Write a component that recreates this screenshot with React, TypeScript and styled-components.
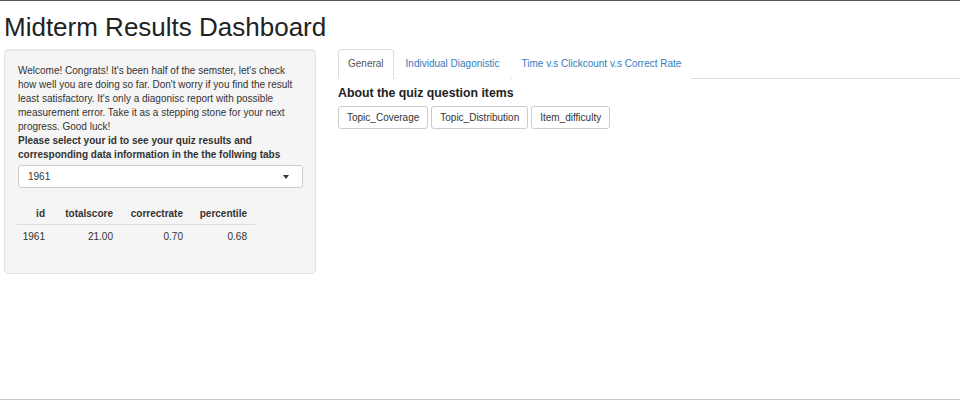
import React from "react";
import styled, { createGlobalStyle } from "styled-components";

const Global = createGlobalStyle`
  html, body { margin: 0; padding: 0; background: #fff; }
  body {
    font-family: "Liberation Sans", Arial, sans-serif;
    font-size: 10px;
    line-height: 14px;
    color: #333;
    width: 960px;
    height: 400px;
    overflow: hidden;
  }
  #root { height: 400px; }
`;

const Page = styled.div`
  box-sizing: border-box;
  height: 400px;
  border-top: 1px solid #555;
  border-bottom: 1px solid #c8c8c8;
  padding: 0 0 0 4px;
`;

const Title = styled.h1`
  margin: 0;
  padding-top: 10px;
  height: 38px;
  font-size: 26px;
  line-height: 32px;
  font-weight: 500;
  color: #222;
`;

const Row = styled.div`
  display: flex;
  align-items: flex-start;
  gap: 22px;
`;

const Sidebar = styled.div`
  box-sizing: border-box;
  width: 312px;
  height: 225px;
  background: #f5f5f5;
  border: 1px solid #e3e3e3;
  border-radius: 4px;
  padding: 14px 12px 0 13px;
  box-shadow: inset 0 1px 1px rgba(0, 0, 0, 0.05);
`;

const Intro = styled.p`
  margin: 0;
`;

const Strong = styled.p`
  margin: 0;
  font-weight: bold;
`;

const Select = styled.div`
  box-sizing: border-box;
  margin-top: 3px;
  height: 23px;
  width: 285px;
  background: #fff;
  border: 1px solid #ccc;
  border-radius: 3px;
  display: flex;
  align-items: center;
  justify-content: space-between;
  padding: 0 13px 0 9px;
`;

const Caret = styled.span`
  width: 0;
  height: 0;
  border-left: 3.5px solid transparent;
  border-right: 3.5px solid transparent;
  border-top: 4px solid #333;
`;

const Table = styled.table`
  margin-top: 15px;
  margin-left: -1px;
  border-collapse: collapse;
`;

const Th = styled.th<{ $w: number }>`
  box-sizing: border-box;
  width: ${(p) => p.$w}px;
  text-align: right;
  font-weight: bold;
  padding: 4px 8px 3px 0;
  border-bottom: 1px solid #ddd;
  line-height: 14px;
`;

const Td = styled.td`
  text-align: right;
  padding: 5px 8px 0 0;
  line-height: 14px;
`;

const Main = styled.div`
  flex: 1;
  display: flex;
  flex-direction: column;
`;

const Tabs = styled.div`
  display: flex;
  border-bottom: 1px solid #ddd;
  height: 29px;
`;

const Tab = styled.div<{ $active?: boolean }>`
  box-sizing: border-box;
  height: 30px;
  padding: 0 9px;
  margin-right: 2px;
  display: flex;
  align-items: center;
  color: ${(p) => (p.$active ? "#555" : "#337cc0")};
  background: #fff;
  border: 1px solid ${(p) => (p.$active ? "#ddd" : "transparent")};
  border-bottom-color: ${(p) => (p.$active ? "#fff" : "transparent")};
  border-radius: 4px 4px 0 0;
`;

const Heading = styled.h4`
  margin: 6px 0 0;
  font-size: 12.3px;
  line-height: 16px;
  font-weight: bold;
  color: #222;
`;

const Buttons = styled.div`
  display: flex;
  gap: 3px;
  margin-top: 5px;
`;

const Button = styled.button`
  box-sizing: border-box;
  height: 23px;
  padding: 0 8px;
  background: #fff;
  border: 1px solid #ccc;
  border-radius: 3px;
  font-family: "Liberation Sans", Arial, sans-serif;
  font-size: 10px;
  color: #333;
`;

export default function App() {
  return (
    <Page>
      <Global />
      <Title>Midterm Results Dashboard</Title>
      <Row>
        <Sidebar>
          <Intro>
            Welcome! Congrats! It's been half of the semster, let's check how well you are
            doing so far. Don't worry if you find the result least satisfactory. It's only a
            diagonisc report with possible measurement error. Take it as a stepping stone for
            your next progress. Good luck!
          </Intro>
          <Strong>
            Please select your id to see your quiz results and corresponding data information
            in the the follwing tabs
          </Strong>
          <Select>
            <span>1961</span>
            <Caret />
          </Select>
          <Table>
            <thead>
              <tr>
                <Th $w={36}>id</Th>
                <Th $w={68}>totalscore</Th>
                <Th $w={70}>correctrate</Th>
                <Th $w={64}>percentile</Th>
              </tr>
            </thead>
            <tbody>
              <tr>
                <Td>1961</Td>
                <Td>21.00</Td>
                <Td>0.70</Td>
                <Td>0.68</Td>
              </tr>
            </tbody>
          </Table>
        </Sidebar>
        <Main>
          <Tabs>
            <Tab $active>General</Tab>
            <Tab>Individual Diagonistic</Tab>
            <Tab>Time v.s Clickcount v.s Correct Rate</Tab>
          </Tabs>
          <Heading>About the quiz question items</Heading>
          <Buttons>
            <Button>Topic_Coverage</Button>
            <Button>Topic_Distribution</Button>
            <Button>Item_difficulty</Button>
          </Buttons>
        </Main>
      </Row>
    </Page>
  );
}
